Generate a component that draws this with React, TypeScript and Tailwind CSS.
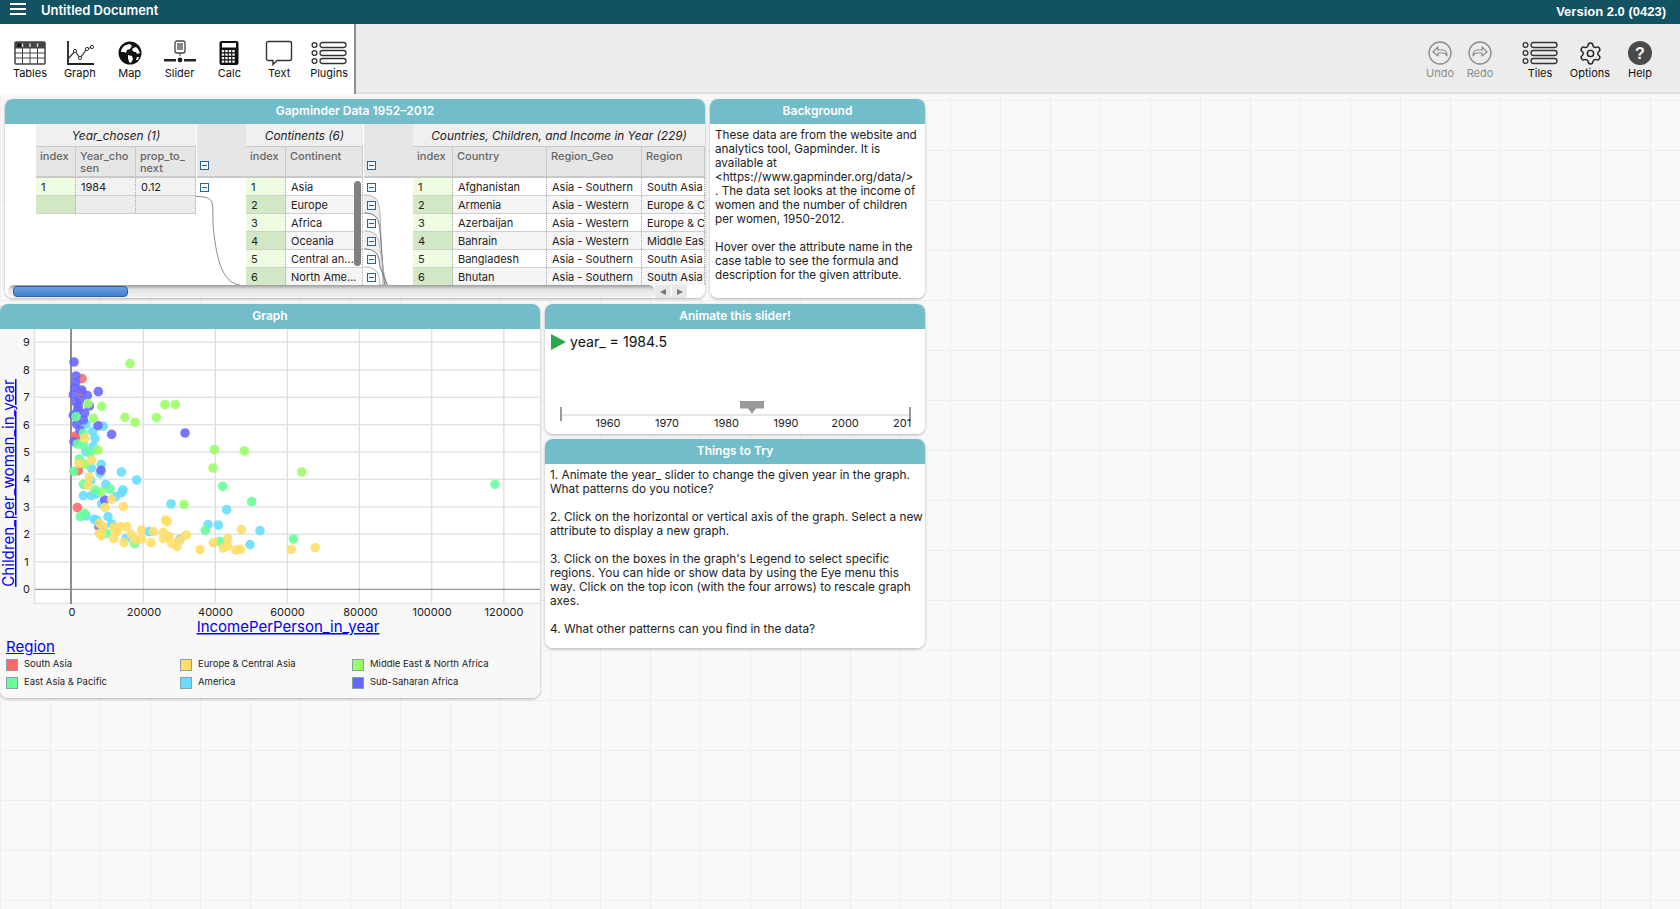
import React from "react";
import { Settings } from "lucide-react";

const FONT = "font-['Inter','Noto_Sans',sans-serif]";

const TablesIcon = () => (
  <svg width="34" height="26" viewBox="0 0 34 26">
    <rect x="2" y="2" width="30" height="22" rx="1" fill="#fff" stroke="#444" strokeWidth="1.5" />
    <rect x="2" y="2" width="30" height="6.5" fill="#444" />
    <rect x="4.5" y="3.5" width="4" height="3.5" fill="#111" />
    <rect x="8.8" y="3.5" width="1.4" height="3.5" fill="#ddd" />
    <rect x="16.3" y="3.5" width="1.4" height="3.5" fill="#ddd" />
    <rect x="23.8" y="3.5" width="1.4" height="3.5" fill="#ddd" />
    <path d="M2 13h30M2 18h30M9.5 8v16M17 8v16M24.5 8v16" stroke="#444" strokeWidth="1" fill="none" />
  </svg>
);
const GraphIcon = () => (
  <svg width="34" height="26" viewBox="0 0 34 26">
    <path d="M5 1v23h26" stroke="#222" strokeWidth="1.8" fill="none" />
    <path d="M6 18l6-7 5 7 7-9 5-2" stroke="#333" strokeWidth="1.2" fill="none" />
    <circle cx="12" cy="11" r="1.6" fill="#fff" stroke="#333" />
    <circle cx="17" cy="18" r="1.6" fill="#fff" stroke="#333" />
    <circle cx="24" cy="9" r="1.6" fill="#fff" stroke="#333" />
    <circle cx="29" cy="7" r="1.6" fill="#fff" stroke="#333" />
  </svg>
);
const MapIcon = () => (
  <svg width="26" height="26" viewBox="0 0 26 26">
    <circle cx="13" cy="13" r="11.5" fill="#111" />
    <path d="M7 6c2-1 4-2 6-2l2 2-2 3-3 1-1 3-2-1-3 0c0-2 1-4 3-6z" fill="#fff" />
    <path d="M16 8l3-1 2 2 2 4-3 1-1-2-2 0-2-2z" fill="#fff" />
    <path d="M11 15l4 1 1 3-2 4-2-1-1-4z" fill="#fff" />
    <path d="M20 17l2 0-1 3-2 0z" fill="#fff" />
  </svg>
);
const SliderIcon = () => (
  <svg width="34" height="26" viewBox="0 0 34 26">
    <rect x="12" y="1" width="10" height="12" rx="2" fill="#fff" stroke="#444" strokeWidth="1.3" />
    <rect x="14" y="3" width="6" height="7" fill="#888" />
    <path d="M17 13v3" stroke="#444" />
    <rect x="1" y="19" width="12" height="2.5" fill="#222" />
    <rect x="21" y="19" width="12" height="2.5" fill="#222" />
    <circle cx="17" cy="20" r="2.4" fill="#222" />
  </svg>
);
const CalcIcon = () => (
  <svg width="22" height="26" viewBox="0 0 22 26">
    <rect x="1.5" y="1" width="19" height="24" rx="2" fill="#111" />
    <rect x="4" y="3" width="14" height="4.5" fill="#fff" />
    {[10, 13.5, 17, 20.5].map((y) =>
      [3.8, 7.3, 10.8, 14.3].map((x) => <rect key={`${x}-${y}`} x={x} y={y} width="2.4" height="2.2" fill="#fff" />)
    )}
  </svg>
);
const TextIcon = () => (
  <svg width="28" height="26" viewBox="0 0 28 26">
    <path d="M3.5 1.5h21a2 2 0 0 1 2 2v15a2 2 0 0 1-2 2H12l-4 4v-4H3.5a2 2 0 0 1-2-2v-15a2 2 0 0 1 2-2z" fill="#fff" stroke="#333" strokeWidth="1.4" />
  </svg>
);
const ListIcon = ({ w = 36 }: { w?: number }) => (
  <svg width={w} height="26" viewBox="0 0 36 26">
    {[4, 12, 20].map((y) => (
      <g key={y} fill="none" stroke="#333" strokeWidth="1.3">
        <circle cx="3.5" cy={y + 1} r="2.4" />
        <rect x="9" y={y - 1.5} width="26" height="5" rx="2.5" />
      </g>
    ))}
  </svg>
);
const HelpIcon = () => (
  <svg width="26" height="26" viewBox="0 0 26 26">
    <circle cx="13" cy="13" r="12" fill="#4a4a4a" />
    <text x="13" y="18.5" textAnchor="middle" fontSize="16" fontWeight="700" fill="#fff" fontFamily="Liberation Sans">?</text>
  </svg>
);
const ArrowCircle = ({ flip }: { flip?: boolean }) => (
  <svg width="26" height="26" viewBox="0 0 26 26">
    <circle cx="13" cy="13" r="11" fill="none" stroke="#8a8a8a" strokeWidth="1.3" />
    <g transform={flip ? "matrix(-1 0 0 1 26 0)" : undefined}>
      <path d="M6 12l5-5v3h5c3 0 4 2 4 6-1-2-2-3-4-3h-5v3z" fill="none" stroke="#8a8a8a" strokeWidth="1.2" strokeLinejoin="round" />
    </g>
  </svg>
);

const ToolItem = ({ label, children, w = "w-[50px]", muted }: { label: string; children: React.ReactNode; w?: string; muted?: boolean }) => (
  <div className={`${w} flex flex-col items-center pt-[16px]`}>
    <div className="h-[26px] flex items-center justify-center">{children}</div>
    <div className={`text-[11px] leading-[14px] ${muted ? "text-[#8c8c8c]" : "text-[#111]"}`}>{label}</div>
  </div>
);

const Tile = ({ title, className, children, bodyClass = "bg-white" }: { title: string; className: string; children: React.ReactNode; bodyClass?: string }) => (
  <div className={`absolute flex flex-col rounded-lg shadow-[0_1px_3px_rgba(0,0,0,0.3)] overflow-hidden ${className}`}>
    <div className="h-[25px] shrink-0 bg-[#72bdc9] text-white text-[12px] font-semibold leading-[23px] text-center">{title}</div>
    <div className={`flex-1 min-h-0 relative ${bodyClass}`}>{children}</div>
  </div>
);

const Minus = () => (
  <div className="w-[9px] h-[9px] border border-[#2a6491] bg-[#f4f8fb] flex items-center justify-center">
    <div className="w-[5px] h-px bg-[#2a6491]" />
  </div>
);

type Col = { name: React.ReactNode; w: string };
const Head = ({ cols }: { cols: Col[] }) => (
  <div className="flex h-[32px] bg-[#e6e6e6] border-t border-t-[#c9c9c9] border-b-2 border-b-[#c9c9c9]">
    {cols.map((c, i) => (
      <div key={i} className={`${c.w} shrink-0 border-r border-r-[#c9c9c9] pl-[4px] pt-[3px] text-[11px] leading-[12px] font-medium text-[#666]`}>{c.name}</div>
    ))}
  </div>
);
const Row = ({ cells, cols, i, tint }: { cells: string[]; cols: Col[]; i: number; tint?: string }) => (
  <div className={`flex h-[18px] border-b border-b-[#cfcfcf] ${tint ?? (i % 2 ? "bg-[#f5f5f5]" : "bg-white")}`}>
    {cells.map((c, k) => (
      <div
        key={k}
        className={`${cols[k].w} shrink-0 pl-[5px] pt-[1px] text-[11px] leading-[17px] text-[#222] whitespace-nowrap overflow-hidden border-r border-dotted border-r-[#a8a8a8] ${k === 0 ? (i % 2 ? "bg-[#d3e8c4]" : "bg-[#eefde2]") : ""}`}
      >{c}</div>
    ))}
  </div>
);
const CaseTable = ({ title, cols, rows, w, tint, children }: { title: string; cols: Col[]; rows: string[][]; w: string; tint?: string[]; children?: React.ReactNode }) => (
  <div className={`${w} shrink-0 relative`}>
    <div className="h-[22px] bg-[#f0f0f0] text-center italic text-[11.8px] leading-[24px] text-[#222] whitespace-nowrap overflow-hidden">{title}</div>
    <Head cols={cols} />
    {rows.map((r, i) => <Row key={i} cells={r} cols={cols} i={i} tint={tint?.[i]} />)}
    {children}
  </div>
);

const Divider = ({ rows, w, under }: { rows: number; w: string; under?: React.ReactNode }) => (
  <div className={`${w} shrink-0 relative`}>
    {under}
    <div className="h-[54px] bg-[#e6e6e6] border-b-2 border-b-[#c9c9c9] relative flex items-end pl-[3px] pb-[6px]">
      <Minus />
    </div>
    {Array.from({ length: rows }).map((_, i) => (
      <div key={i} className="h-[18px] pl-[3px] flex items-center relative">
        <Minus />
      </div>
    ))}
  </div>
);

const YS = [71, 89, 107, 125, 143];
const curve = (y: number, i: number) => `M0 ${y}C12 ${y} 15 ${y + 5} 16 ${y + 18}L${19 + i * 1.5} 161`;
const band = (y1: number, i: number) =>
  `${curve(y1, i)}L${19 + (i + 1) * 1.5} 161L${16} ${y1 + 36}C15 ${y1 + 23} 12 ${y1 + 18} 0 ${y1 + 18}Z`;
const BandSvg = () => (
  <svg width="50" height="161" viewBox="0 0 50 161" className="absolute left-0 top-0">
    <path d={band(YS[0], 0)} fill="#eeeeee" />
    <path d={band(YS[2], 2)} fill="#eeeeee" />
    {YS.map((y, i) => (
      <path key={y} d={curve(y, i)} fill="none" stroke={i % 2 ? "#777" : "#b5b5b5"} strokeWidth="1" />
    ))}
  </svg>
);

const pz = (a: number[][]) => a.map(([x, y]) => [x / 3, 300 + y / 3]);
const PURPLE = pz([[222,186],[228,228],[227,248],[225,262],[262,287],[295,275],[220,284],[228,306],[268,318],[232,332],[254,340],[220,346],[230,372],[294,377],[240,390],[335,403],[555,399],[303,511],[314,600],[297,680],[240,300],[235,320],[245,270],[250,360],[222,425]]);
const RED = pz([[246,236],[245,278],[226,408],[228,415],[235,512],[232,623]]);
const LIME = [...pz([[390,191],[264,311],[305,319],[280,355],[375,352],[405,367],[469,353],[495,314],[526,314],[643,449],[733,453],[639,504],[294,450],[552,613],[303,576],[255,493]]), [301.7, 472]];
const MINT = [...pz([[228,350],[250,400],[232,432],[252,437],[238,477],[221,514],[250,553],[330,567],[285,570],[668,559],[755,605],[241,650],[254,640],[319,700],[404,731],[616,691],[660,725],[270,460]]), [495, 484.3], [293.5, 539]];
const CYAN = pz([[258,372],[310,379],[278,394],[285,415],[258,455],[280,440],[304,493],[300,520],[274,504],[364,516],[410,540],[272,542],[317,553],[369,570],[347,590],[365,578],[250,587],[274,587],[288,582],[305,612],[513,612],[680,629],[258,648],[283,658],[290,660],[324,650],[335,672],[378,716],[447,695],[539,718],[624,674],[655,675],[780,692],[750,734]]);
const YELLOW = [...pz([[255,414],[237,490],[275,481],[268,531],[265,556],[335,598],[315,622],[370,620],[298,670],[310,680],[342,682],[298,700],[305,707],[341,716],[350,695],[360,680],[380,680],[393,703],[372,728],[407,720],[425,690],[425,717],[453,728],[460,695],[490,697],[490,716],[497,660],[501,665],[508,710],[515,730],[531,740],[540,720],[559,705],[600,749],[640,728],[670,744],[683,716],[683,738],[708,750],[722,748],[724,689]]), [291.3, 549.3], [315.3, 547.7]];
const SETS: [number[][], string][] = [[CYAN, "#66ddff"], [RED, "#ff6666"], [PURPLE, "#6666ff"], [LIME, "#99ff66"], [MINT, "#66ff99"], [YELLOW, "#ffdd66"]];

const HY = [342.3, 370, 397.3, 424.7, 452, 479.3, 507, 534.3, 562];
const VX = [143.3, 215.3, 287.4, 359.4, 431.6, 503.8];
const XL: [number, string][] = [[72, "0"], [144, "20000"], [215.5, "40000"], [287.5, "60000"], [360.5, "80000"], [432, "100000"], [504, "120000"]];

const Chart = () => (
  <svg width="540" height="311" viewBox="0 329 540 311" className="block">
    <rect x="35" y="329" width="505" height="274" fill="#fff" />
    {HY.map((y) => <line key={y} x1="35" x2="540" y1={y} y2={y} stroke="#e4e4e4" strokeWidth="1.4" />)}
    {VX.map((x) => <line key={x} y1="329" y2="604" x1={x} x2={x} stroke="#e0e0e0" strokeWidth="1.4" />)}
    <line x1="34.5" x2="34.5" y1="329" y2="604" stroke="#e2e2e2" strokeWidth="1.6" />
    <line x1="34" x2="540" y1="603.5" y2="603.5" stroke="#e2e2e2" strokeWidth="1.6" />
    <line x1="35" x2="540" y1="589.3" y2="589.3" stroke="#777" strokeWidth="1" />
    <line x1="71" x2="71" y1="329" y2="604" stroke="#8e8e8e" strokeWidth="2" />
    {SETS.map(([pts, c]) => pts.map(([x, y], i) => <circle key={c + i} cx={x} cy={y} r="4.8" fill={c} fillOpacity="0.88" />))}
    {[9, 8, 7, 6, 5, 4, 3, 2, 1, 0].map((n, i) => (
      <text key={n} x="26.5" y={342.3 + i * 27.4 + 4} textAnchor="middle" fontSize="11" fill="#222" fontFamily="Inter">{n}</text>
    ))}
    {XL.map(([x, t]) => <text key={t} x={x} y="616" textAnchor="middle" fontSize="11" fill="#222" fontFamily="Inter">{t}</text>)}
    <text x="288" y="632" textAnchor="middle" fontSize="15" fill="#0000ee" fontFamily="Inter" textDecoration="underline">IncomePerPerson_in_year</text>
    <text transform="translate(14 483) rotate(-90)" textAnchor="middle" fontSize="15.2" fill="#0000ee" fontFamily="Inter" textDecoration="underline">Children_per_woman_in_year</text>
  </svg>
);

const LegendKey = ({ c, t }: { c: string; t: string }) => (
  <div className="flex items-center gap-[6px] h-[18px]">
    <div className="w-[12px] h-[12px] border border-[#8aa0a8]" style={{ background: c }} />
    <div className="text-[9.5px] leading-[12px] -mt-[2px] text-[#222]">{t}</div>
  </div>
);

const SliderAxis = () => (
  <svg width="380" height="50" viewBox="545 384 380 50" className="block">
    <line x1="561" x2="910" y1="415" y2="415" stroke="#dedede" strokeWidth="1.6" />
    <line x1="561" x2="561" y1="407" y2="421" stroke="#808080" strokeWidth="1.6" />
    <line x1="910" x2="910" y1="407" y2="421" stroke="#808080" strokeWidth="1.6" />
    <path d="M740 401h24v7.5h-8l-4 5.5-4-5.5h-8z" fill="#999" />
    {[[608, "1960"], [667, "1970"], [726.5, "1980"], [786, "1990"], [845, "2000"]].map(([x, t]) => (
      <text key={t} x={x} y="427" textAnchor="middle" fontSize="11" fill="#222" fontFamily="Inter">{t}</text>
    ))}
    <text x="893" y="427" fontSize="11" fill="#222" fontFamily="Inter">201</text>
  </svg>
);

const idx = (rows: string[][]) => rows.map((r, i) => [String(i + 1), ...r]);

export default function App() {
  const yearCols: Col[] = [
    { name: "index", w: "w-[40px]" },
    { name: <>Year_cho<br />sen</>, w: "w-[60px]" },
    { name: <>prop_to_<br />next</>, w: "w-[60px]" },
  ];
  const contCols: Col[] = [
    { name: "index", w: "w-[40px]" },
    { name: "Continent", w: "w-[77px]" },
  ];
  const countryCols: Col[] = [
    { name: "index", w: "w-[40px]" },
    { name: "Country", w: "w-[94px]" },
    { name: "Region_Geo", w: "w-[95px]" },
    { name: "Region", w: "w-[63px]" },
  ];
  return (
    <div className={`h-screen w-full overflow-hidden flex flex-col ${FONT}`}>
      <header className="h-[24px] shrink-0 bg-[#125262] flex items-center pl-[10px] pr-[14px] text-white">
        <div className="w-[16px] flex flex-col gap-[3px] mr-[15px] -mt-[6px]">
          <div className="h-[2px] bg-white" />
          <div className="h-[2px] bg-white" />
          <div className="h-[2px] bg-white" />
        </div>
        <div className="text-[13px] font-semibold -mt-[3px]">Untitled Document</div>
        <div className="ml-auto text-[13px] font-bold -mt-[1px] font-['Liberation_Sans',sans-serif]">Version 2.0 (0423)</div>
      </header>

      <div className="h-[70px] shrink-0 bg-[#ececec] border-b-2 border-b-[#dedede] flex">
        <div className="w-[356px] h-[70px] bg-white border-r-2 border-r-[#8f8f8f] flex pl-[5px]">
          <ToolItem label="Tables"><TablesIcon /></ToolItem>
          <ToolItem label="Graph"><GraphIcon /></ToolItem>
          <ToolItem label="Map"><MapIcon /></ToolItem>
          <ToolItem label="Slider"><SliderIcon /></ToolItem>
          <ToolItem label="Calc"><CalcIcon /></ToolItem>
          <ToolItem label="Text"><TextIcon /></ToolItem>
          <ToolItem label="Plugins"><ListIcon /></ToolItem>
        </div>
        <div className="ml-auto flex pr-[15px]">
          <ToolItem label="Undo" w="w-[40px]" muted><ArrowCircle /></ToolItem>
          <ToolItem label="Redo" w="w-[40px] mr-[15px]" muted><ArrowCircle flip /></ToolItem>
          <ToolItem label="Tiles"><ListIcon /></ToolItem>
          <ToolItem label="Options"><Settings size={25} strokeWidth={1.4} color="#222" /></ToolItem>
          <ToolItem label="Help"><HelpIcon /></ToolItem>
        </div>
      </div>

      <main className="flex-1 relative bg-[#f9f9f9] bg-[linear-gradient(to_right,#efefef_1px,transparent_1px),linear-gradient(to_bottom,#efefef_1px,transparent_1px)] bg-[size:50px_50px] bg-[position:0_6px]">
        <Tile title="Gapminder Data 1952–2012" className="left-[5px] top-[5px] w-[700px] h-[199px]">
          <div className="h-[161px] overflow-hidden flex pl-[31px]">
            <CaseTable
              title="Year_chosen (1)"
              w="w-[160px]"
              cols={yearCols}
              rows={[["1", "1984", "0.12"], ["", "", ""]]}
              tint={["bg-[#f2f2f2]", "bg-[#ececec]"]}
            />
            <div className="relative">
              <Divider rows={1} w="w-[49px] ml-px" />
              <svg width="50" height="161" viewBox="0 0 50 161" className="absolute left-0 top-0 pointer-events-none">
                <path d="M0 72.5C24 72.5 14 82 18 110C22 145 30 159 44 161" fill="none" stroke="#8c8c8c" strokeWidth="1" />
              </svg>
            </div>
            <CaseTable
              title="Continents (6)"
              w="w-[117px]"
              cols={contCols}
              rows={idx([["Asia"], ["Europe"], ["Africa"], ["Oceania"], ["Central an..."], ["North Ame..."]])}
            >
              <div className="absolute left-[108px] top-[57px] w-[7px] h-[85px] rounded-full bg-[#808080]" />
            </CaseTable>
            <Divider rows={6} w="w-[49px] ml-px" under={<BandSvg />} />
            <CaseTable
              title="Countries, Children, and Income in Year (229)"
              w="w-[292px]"
              cols={countryCols}
              rows={idx([
                ["Afghanistan", "Asia - Southern", "South Asia"],
                ["Armenia", "Asia - Western", "Europe & C"],
                ["Azerbaijan", "Asia - Western", "Europe & C"],
                ["Bahrain", "Asia - Western", "Middle Eas"],
                ["Bangladesh", "Asia - Southern", "South Asia"],
                ["Bhutan", "Asia - Southern", "South Asia"],
              ])}
            />
          </div>
          <div className="h-[13px] bg-white flex">
            <div className="ml-[3px] w-[647px] h-[13px] rounded-l-md rounded-r-md bg-[linear-gradient(to_bottom,#9c9c9c,#e4e4e4_35%,#f4f4f4)] pl-[5px] pt-[1px]">
              <div className="w-[115px] h-[11px] rounded-[4px] border border-[#2d5f9f] bg-[linear-gradient(to_bottom,#6c9fe0,#3f7fd4)]" />
            </div>
            <div className="w-[32px] h-[13px] bg-[#e8e8e8] flex items-center justify-center gap-[5px] text-[#777]">
              <div className="w-0 h-0 border-y-[3.5px] border-y-transparent border-r-[6px] border-r-[#777]" />
              <div className="w-px h-[11px] bg-white" />
              <div className="w-0 h-0 border-y-[3.5px] border-y-transparent border-l-[6px] border-l-[#777]" />
            </div>
          </div>
        </Tile>

        <Tile title="Background" className="left-[710px] top-[5px] w-[215px] h-[199px]">
          <div className="px-[5px] pt-[4px] text-[11.65px] leading-[14px] text-[#222]">
            <p>These data are from the website and analytics tool, Gapminder. It is available at<br />&lt;https://www.gapminder.org/data/&gt;<br />. The data set looks at the income of women and the number of children per women, 1950-2012.</p>
            <p className="mt-[14px]">Hover over the attribute name in the case table to see the formula and description for the given attribute.</p>
          </div>
        </Tile>

        <Tile title="Graph" className="left-0 top-[210px] w-[540px] h-[394px]" bodyClass="bg-[#f8f8f8]">
          <Chart />
          <div className="pl-[6px] -mt-[2px]">
            <div className="text-[15px] leading-[18px] text-[#0000ee] underline">Region</div>
            <div className="grid grid-cols-[174px_172px_1fr] w-[530px]">
              <LegendKey c="#ff6666" t="South Asia" />
              <LegendKey c="#ffdd66" t="Europe & Central Asia" />
              <LegendKey c="#99ff66" t="Middle East & North Africa" />
              <LegendKey c="#66ff99" t="East Asia & Pacific" />
              <LegendKey c="#66ddff" t="America" />
              <LegendKey c="#6666ff" t="Sub-Saharan Africa" />
            </div>
          </div>
        </Tile>

        <Tile title="Animate this slider!" className="left-[545px] top-[210px] w-[380px] h-[130px]">
          <div className="flex items-center h-[26px] pl-[6px]">
            <div className="w-0 h-0 border-y-[8px] border-y-transparent border-l-[15px] border-l-[#2fa84a]" />
            <div className="ml-[4px] text-[14.1px] text-[#111]">year_ = 1984.5</div>
          </div>
          <div className="mt-[29px]"><SliderAxis /></div>
        </Tile>

        <Tile title="Things to Try" className="left-[545px] top-[345px] w-[380px] h-[209px]">
          <div className="pl-[5px] pr-[2px] pt-[4px] text-[11.8px] leading-[14px] text-[#222] space-y-[14px]">
            <p>1. Animate the year_ slider to change the given year in the graph. What patterns do you notice?</p>
            <p>2. Click on the horizontal or vertical axis of the graph. Select a new attribute to display a new graph.</p>
            <p>3. Click on the boxes in the graph's Legend to select specific regions. You can hide or show data by using the Eye menu this way. Click on the top icon (with the four arrows) to rescale graph axes.</p>
            <p>4. What other patterns can you find in the data?</p>
          </div>
        </Tile>
      </main>
    </div>
  );
}
